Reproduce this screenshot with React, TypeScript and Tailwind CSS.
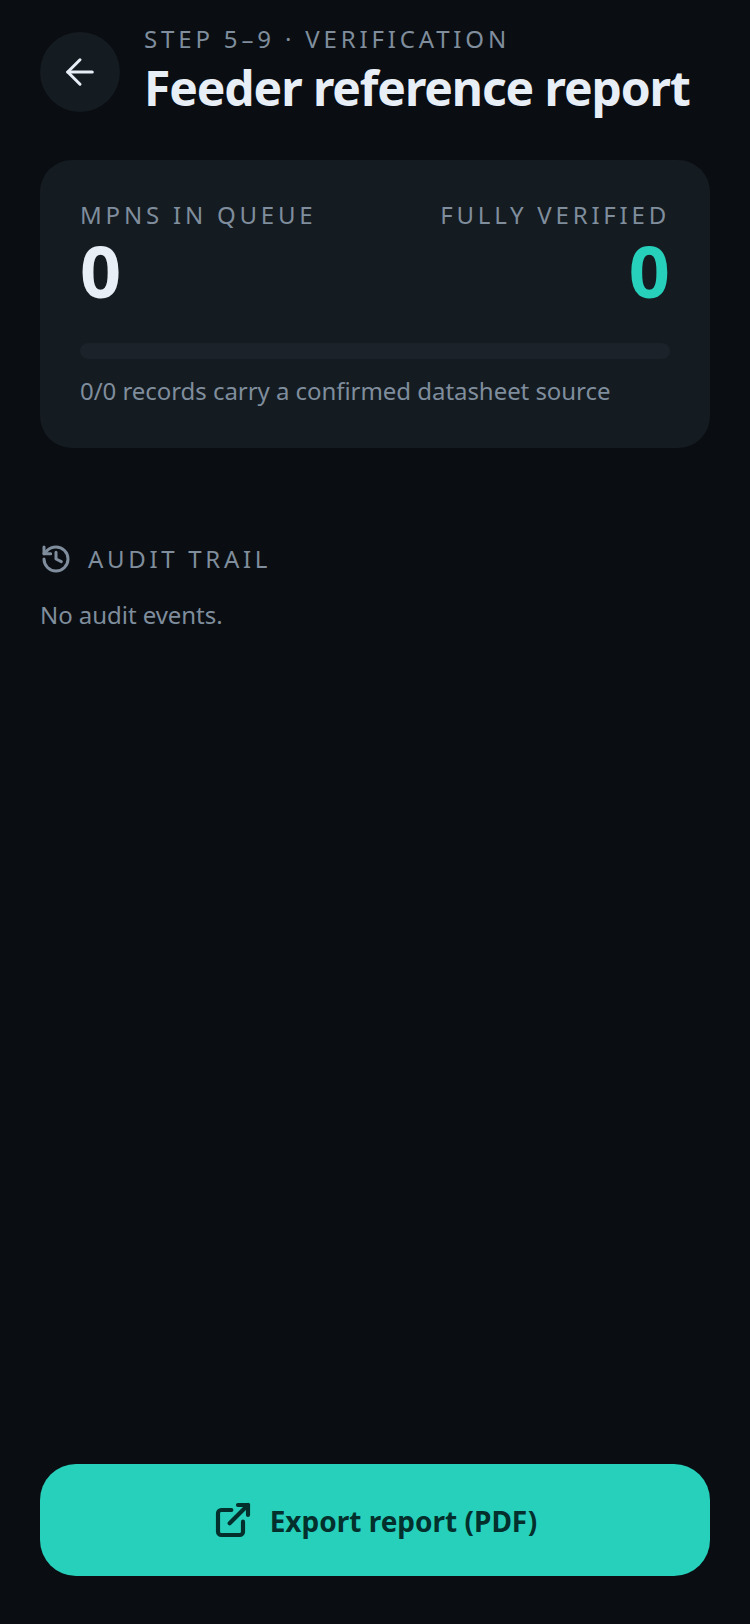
import React from "react";
import { ArrowLeft, History, ExternalLink } from "lucide-react";

export default function App() {
  return (
    <div className="w-[750px] h-[1624px] bg-[#0a0d12] flex flex-col px-10 font-['Noto_Sans',sans-serif] overflow-hidden">
      <header className="flex items-start gap-6 h-[160px] pt-[24px]">
        <button className="mt-2 w-20 h-20 rounded-full bg-[#141b21] flex items-center justify-center shrink-0">
          <ArrowLeft size={42} color="#e8eef5" strokeWidth={1.75} />
        </button>
        <div className="flex flex-col">
          <div className="text-[24px] leading-[30px] tracking-[3.84px] text-[#7f8d9c]">STEP 5–9 · VERIFICATION</div>
          <h1 className="mt-px text-[48px] leading-[66px] font-bold tracking-[-1.1px] text-[#e8eef5]">Feeder reference report</h1>
        </div>
      </header>

      <section className="h-[288px] rounded-[32px] bg-[#141b21] px-10 pt-[41px]">
        <div className="flex justify-between">
          <div className="flex flex-col">
            <div className="text-[24px] leading-[28px] tracking-[3.8px] text-[#7f8d9c]">MPNS IN QUEUE</div>
            <div className="mt-px text-[72px] leading-[80px] font-bold text-[#e8eef5]">0</div>
          </div>
          <div className="flex flex-col items-end">
            <div className="text-[24px] leading-[28px] tracking-[3.8px] text-[#7f8d9c]">FULLY VERIFIED</div>
            <div className="mt-px text-[72px] leading-[80px] font-bold text-[#26d0bb]">0</div>
          </div>
        </div>
        <div className="mt-[33px] h-4 rounded-full bg-[#1b2229]" />
        <div className="mt-[14px] text-[24px] leading-[36px] tracking-[-0.05px] text-[#7f8d9c]">0/0 records carry a confirmed datasheet source</div>
      </section>

      <div className="mt-[93px] flex items-center gap-4">
        <History size={32} color="#7f8d9c" strokeWidth={2.25} />
        <div className="text-[24px] leading-[36px] tracking-[3.7px] text-[#7f8d9c]">AUDIT TRAIL</div>
      </div>
      <div className="mt-[20px] text-[24px] leading-[36px] tracking-[-0.05px] text-[#7f8d9c]">No audit events.</div>

      <div className="flex-1" />

      <button className="mb-[48px] h-[112px] rounded-[36px] bg-[#26d0bb] flex items-center justify-center gap-[17px] text-[#03302c]">
        <ExternalLink size={40} color="#03302c" strokeWidth={2.5} />
        <span className="text-[28px] leading-[40px] mt-[2px] font-bold">Export report (PDF)</span>
      </button>
    </div>
  );
}
